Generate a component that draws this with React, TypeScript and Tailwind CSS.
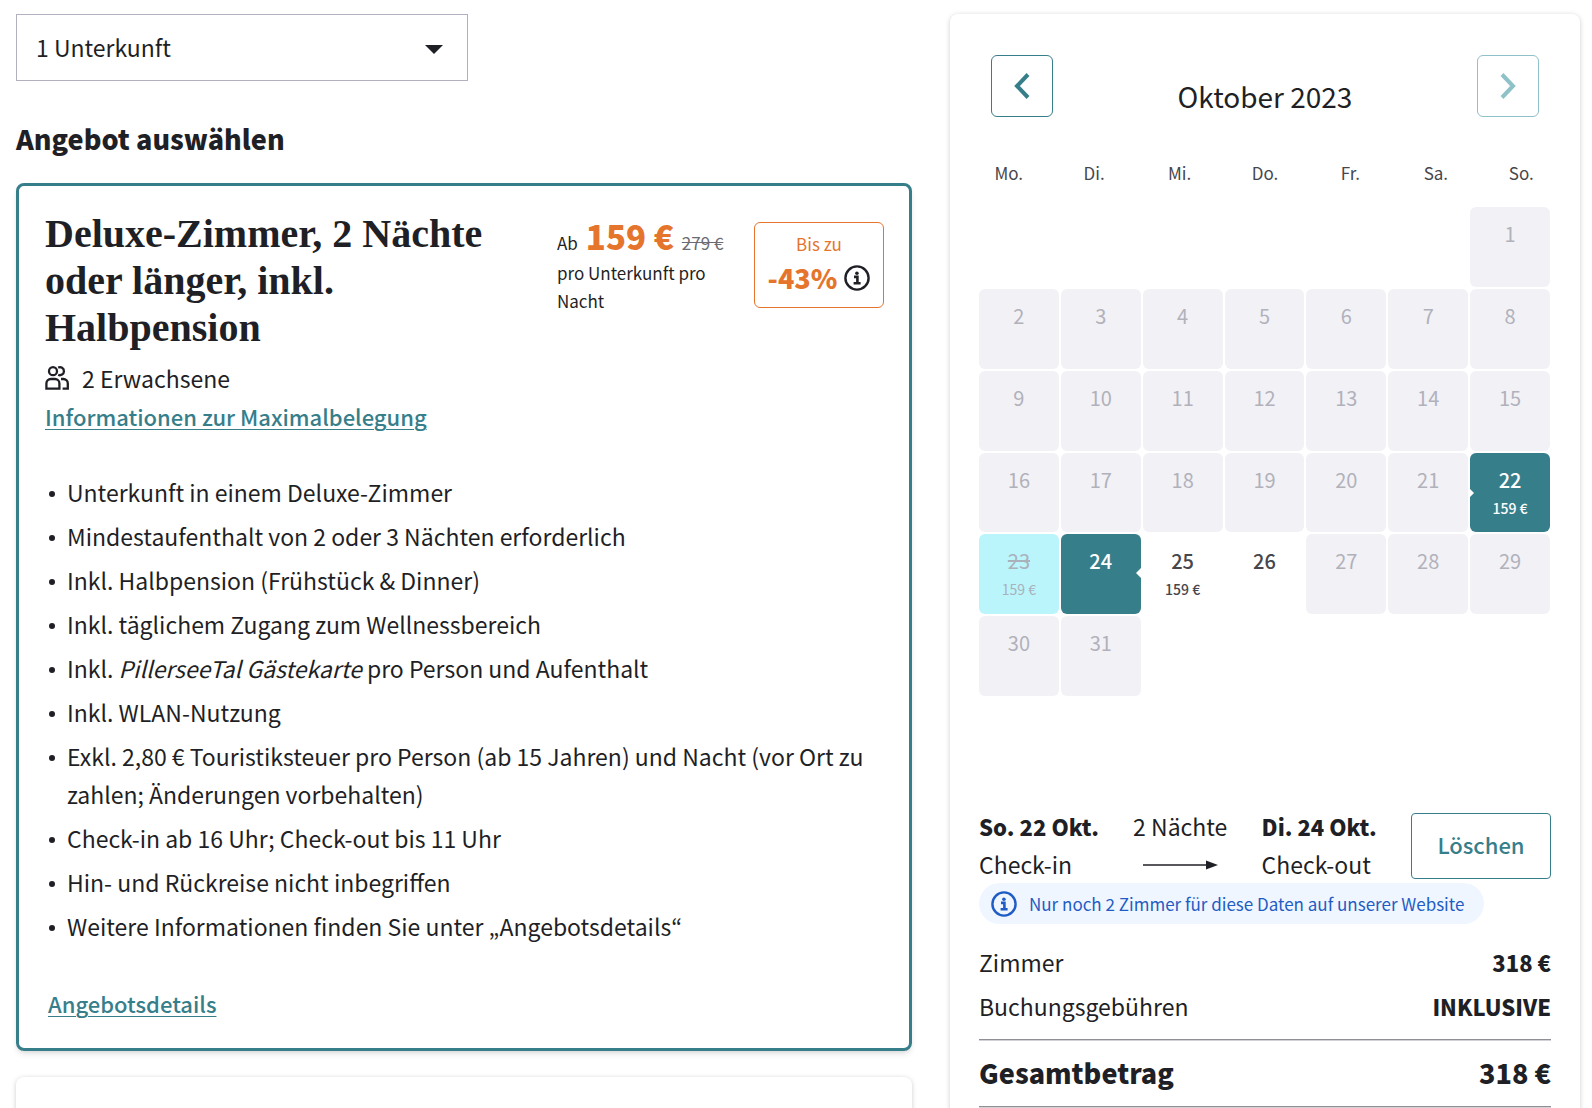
import React, { useState } from "react";

type Day = {
  day: number;
  price?: string;
  state?: "start" | "end" | "between" | "free";
};

const weekdays = ["Mo.", "Di.", "Mi.", "Do.", "Fr.", "Sa.", "So."];

const special: Record<number, Omit<Day, "day">> = {
  22: { state: "start", price: "159 €" },
  23: { state: "between", price: "159 €" },
  24: { state: "end" },
  25: { state: "free", price: "159 €" },
  26: { state: "free" },
};

const days: Day[] = Array.from({ length: 31 }, (_, i) => ({
  day: i + 1,
  ...special[i + 1],
}));

const features: React.ReactNode[] = [
  "Unterkunft in einem Deluxe-Zimmer",
  "Mindestaufenthalt von 2 oder 3 Nächten erforderlich",
  "Inkl. Halbpension (Frühstück & Dinner)",
  "Inkl. täglichem Zugang zum Wellnessbereich",
  <>
    Inkl. <em>PillerseeTal Gästekarte</em> pro Person und Aufenthalt
  </>,
  "Inkl. WLAN-Nutzung",
  "Exkl. 2,80 € Touristiksteuer pro Person (ab 15 Jahren) und Nacht (vor Ort zu zahlen; Änderungen vorbehalten)",
  "Check-in ab 16 Uhr; Check-out bis 11 Uhr",
  "Hin- und Rückreise nicht inbegriffen",
  "Weitere Informationen finden Sie unter „Angebotsdetails“",
];

function InfoIcon({ className }: { className?: string }) {
  return (
    <svg viewBox="0 0 26 26" className={className} fill="none" aria-hidden="true">
      <circle cx="13" cy="13" r="11.6" stroke="currentColor" strokeWidth="2.4" />
      <circle cx="12.9" cy="8.2" r="1.8" fill="currentColor" />
      <path d="M10 11.9h3.4v6.2M9.6 18.3h7" stroke="currentColor" strokeWidth="2.6" />
    </svg>
  );
}

function PeopleIcon() {
  return (
    <svg viewBox="0 0 24 24" className="size-6" fill="none" stroke="currentColor" strokeWidth="2.3" aria-hidden="true">
      <circle cx="8" cy="5.2" r="4" />
      <path d="M13.2 1.6a4 4 0 1 1 0 7.2" />
      <path d="M1.4 22.6v-5.2a4.4 4.4 0 0 1 4.4-4.4h4.2a4.4 4.4 0 0 1 4.4 4.4v5.2z" />
      <path d="M16 13h2.4a4.4 4.4 0 0 1 4.4 4.4v5.2h-5.2" />
    </svg>
  );
}

function DayCell({ day, price, state }: Day) {
  let colors = "bg-[#f2f1f6] text-[#b1b1bb]";
  if (state === "start" || state === "end") colors = "bg-[#377e8b] text-white font-medium";
  if (state === "between") colors = "bg-[#bbf5fc] text-[#a9b1bb]";
  if (state === "free") colors = "bg-white text-[#46464c] font-medium";

  return (
    <button
      type="button"
      disabled={!state}
      className={`relative flex aspect-square flex-col items-center rounded-md pt-[13px] ${day === 1 ? "col-start-7" : ""} ${colors}`}
    >
      <span className={`text-[20px] leading-7 ${state === "between" ? "line-through" : ""}`}>{day}</span>
      {price && <span className="mt-0.5 text-[14px] leading-6">{price}</span>}
      {state === "start" && (
        <span className="absolute top-9 left-0 size-0 border-y-4 border-l-4 border-y-transparent border-l-white" />
      )}
      {state === "end" && (
        <span className="absolute top-8.5 right-0 size-0 border-y-5 border-r-5 border-y-transparent border-r-white" />
      )}
    </button>
  );
}

function Calendar() {
  return (
    <section>
      <div className="flex items-start justify-between px-[41px] pt-[41px]">
        <button
          type="button"
          aria-label="Vorheriger Monat"
          className="flex size-[62px] items-center justify-center rounded-md border border-[#377e8b] text-[#377e8b]"
        >
          <svg viewBox="0 0 16 26" className="h-6.5 w-4" fill="none" stroke="currentColor" strokeWidth="4">
            <path d="M14 1.5 3 13l11 11.5" />
          </svg>
        </button>
        <h2 className="pt-[21px] text-[28px] leading-10">Oktober 2023</h2>
        <button
          type="button"
          aria-label="Nächster Monat"
          disabled
          className="flex size-[62px] items-center justify-center rounded-md border border-[#8fc1c9] text-[#8fc1c9]"
        >
          <svg viewBox="0 0 16 26" className="h-6.5 w-4" fill="none" stroke="currentColor" strokeWidth="4">
            <path d="m2 1.5 11 11.5L2 24.5" />
          </svg>
        </button>
      </div>
      <div className="grid grid-cols-7 px-4 pt-11 text-center text-[17px] leading-6 text-[#46464c]">
        {weekdays.map((name) => (
          <span key={name}>{name}</span>
        ))}
      </div>
      <div className="grid grid-cols-7 gap-0.5 pt-[22px] pr-[30px] pl-[29px]">
        {days.map((item) => (
          <DayCell key={item.day} {...item} />
        ))}
      </div>
    </section>
  );
}

function Offer() {
  return (
    <article className="rounded-lg border-3 border-[#377e8b] pt-6 pr-[25px] pb-[26px] pl-[26px] shadow-md">
      <div className="flex items-start justify-between">
        <h3 className="w-[460px] font-['Liberation_Serif',serif] text-[40px] leading-[47px] font-bold">
          Deluxe-Zimmer, 2 Nächte oder länger, inkl. Halbpension
        </h3>
        <div className="flex items-start gap-6 pt-3">
          <div className="w-[173px] text-[17px] leading-7">
            <p className="flex h-[37px] items-baseline gap-2 whitespace-nowrap">
              Ab <strong className="text-[33px] leading-7 font-black text-[#e5752c]">159 €</strong>
              <s className="text-[#6b6b72]">279 €</s>
            </p>
            <p>pro Unterkunft pro Nacht</p>
          </div>
          <div className="flex h-[86px] w-[130px] flex-col items-center rounded-md border border-[#e5752c] pt-[7px] text-[#e5752c]">
            <span className="text-[17px] leading-7">Bis zu</span>
            <div className="flex items-center gap-[7px]">
              <strong className="text-[27px] leading-10 font-black">-43%</strong>
              <InfoIcon className="size-[26px] text-[#1f1f26]" />
            </div>
          </div>
        </div>
      </div>
      <p className="flex items-center gap-[13px] pt-2 leading-[38px]">
        <PeopleIcon />2 Erwachsene
      </p>
      <a href="#belegung" className="block w-fit text-[22px] leading-[38px] font-medium text-[#377e8b] underline decoration-1 underline-offset-3">
        Informationen zur Maximalbelegung
      </a>
      <ul className="flex flex-col gap-1.5 pt-[38px] leading-[38px]">
        {features.map((feature, i) => (
          <li key={i} className="flex gap-3 pl-1">
            <span className="mt-[18px] size-1.5 shrink-0 rounded-full bg-[#1f1f26]" />
            <span>{feature}</span>
          </li>
        ))}
      </ul>
      <a href="#details" className="mt-[39px] ml-[3px] block w-fit text-[22px] leading-[38px] font-medium text-[#377e8b] underline decoration-1 underline-offset-3">
        Angebotsdetails
      </a>
    </article>
  );
}

function Summary() {
  return (
    <section className="px-[29px] pt-[111px]">
      <div className="flex items-start justify-between leading-[38px]">
        <div>
          <strong className="block text-[22px] font-black">So. 22 Okt.</strong>
          Check-in
        </div>
        <div className="flex flex-col items-center">
          <span>2 Nächte</span>
          <svg viewBox="0 0 75 10" className="mt-[15px] h-2.5 w-[75px]" aria-hidden="true">
            <path d="M0 5h66" stroke="currentColor" strokeWidth="1.4" />
            <path d="M63 .5 75 5 63 9.5z" fill="currentColor" />
          </svg>
        </div>
        <div>
          <strong className="block text-[22px] font-black">Di. 24 Okt.</strong>
          Check-out
        </div>
        <button type="button" className="mt-1.5 h-[66px] w-[140px] rounded-sm border border-[#377e8b] pb-1 text-[22px] font-medium text-[#377e8b]">
          Löschen
        </button>
      </div>
      <p className="flex h-[41px] w-fit items-center gap-3 rounded-full bg-[#eff6ff] pr-5 pl-3 text-[17px] text-[#1f5cc4]">
        <InfoIcon className="size-[26px]" />
        Nur noch 2 Zimmer für diese Daten auf unserer Website
      </p>
      <dl className="pt-[19px] leading-[38px]">
        <div className="flex justify-between">
          <dt>Zimmer</dt>
          <dd className="text-[22px] font-black">318 €</dd>
        </div>
        <div className="flex justify-between pt-1.5">
          <dt>Buchungsgebühren</dt>
          <dd className="text-[22px] font-black">INKLUSIVE</dd>
        </div>
        <div className="mt-3.5 flex justify-between border-y border-[#8f8f94] py-3.5 text-[27px] font-black shadow-[0_1px_0_#d2d2d6,inset_0_1px_0_#d2d2d6]">
          <dt>Gesamtbetrag</dt>
          <dd>318 €</dd>
        </div>
      </dl>
    </section>
  );
}

export default function App() {
  const [rooms, setRooms] = useState("1");

  return (
    <div className="h-screen overflow-hidden bg-white font-['Noto_Sans_CJK_KR','Noto_Sans',sans-serif] text-[23px] text-[#1f1f26]">
      <div className="grid grid-cols-[896fr_630fr] gap-[38px] px-3 pt-3.5 pl-4">
        <main>
          <div className="relative w-[452px]">
            <select
              aria-label="Anzahl Unterkünfte"
              value={rooms}
              onChange={(e) => setRooms(e.target.value)}
              className="h-[67px] w-full appearance-none border border-[#b1b1bf] bg-white px-[19px]"
            >
              <option value="1">1 Unterkunft</option>
              <option value="2">2 Unterkünfte</option>
            </select>
            <svg viewBox="0 0 18 9" className="pointer-events-none absolute top-[31px] right-[25px] h-[9px] w-[18px]" fill="currentColor">
              <path d="M0 0h18L9 9z" />
            </svg>
          </div>
          <h2 className="pt-[39px] pb-[25px] text-[27px] leading-[38px] font-black">Angebot auswählen</h2>
          <Offer />
          <div className="mt-[26px] h-40 rounded-lg bg-white shadow-[0_1px_5px_rgba(0,0,0,0.2)]" />
        </main>
        <aside className="rounded-lg pb-12 shadow-[0_1px_5px_rgba(0,0,0,0.2)]">
          <Calendar />
          <Summary />
        </aside>
      </div>
    </div>
  );
}
